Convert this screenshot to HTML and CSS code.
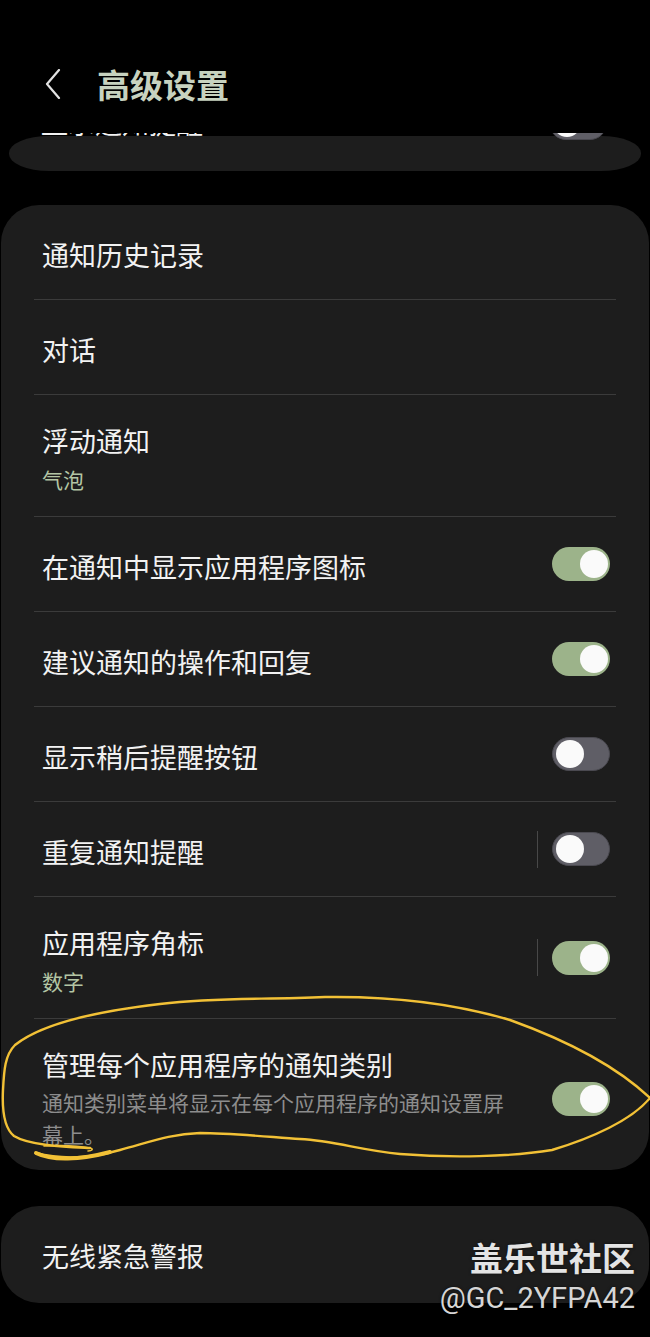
FILE: index.html
```html
<!DOCTYPE html>
<html lang="zh-CN">
	<head>
		<meta charset="UTF-8" />
		<meta name="viewport" content="width=device-width, initial-scale=1.0" />
		<title>高级设置</title>
		<link rel="stylesheet" href="styles.css">
	</head>
	<body>
		<header class="topbar">
			<svg class="back" width="16" height="30" viewBox="0 0 16 30">
				<polyline points="14,1 2,15 14,29" fill="none" stroke="#e2e2e2" stroke-width="2.2" stroke-linecap="round" stroke-linejoin="round" />
			</svg>
			<h1>高级设置</h1>
		</header>

		<!-- card scrolled under the header -->
		<div class="peek">
			<div class="peek-card">
				<span class="peek-text">显示通知提醒</span>
				<div class="switch off"><div class="knob"></div></div>
			</div>
		</div>

		<div class="card">
			<div class="row">
				<div class="text"><div class="title">通知历史记录</div></div>
			</div>
			<div class="row">
				<div class="text"><div class="title">对话</div></div>
			</div>
			<div class="row tall">
				<div class="text">
					<div class="title">浮动通知</div>
					<div class="sub">气泡</div>
				</div>
			</div>
			<div class="row">
				<div class="text"><div class="title">在通知中显示应用程序图标</div></div>
				<div class="switch on"><div class="knob"></div></div>
			</div>
			<div class="row">
				<div class="text"><div class="title">建议通知的操作和回复</div></div>
				<div class="switch on"><div class="knob"></div></div>
			</div>
			<div class="row">
				<div class="text"><div class="title">显示稍后提醒按钮</div></div>
				<div class="switch off"><div class="knob"></div></div>
			</div>
			<div class="row">
				<div class="text"><div class="title">重复通知提醒</div></div>
				<div class="sep"></div>
				<div class="switch off"><div class="knob"></div></div>
			</div>
			<div class="row tall">
				<div class="text">
					<div class="title">应用程序角标</div>
					<div class="sub">数字</div>
				</div>
				<div class="sep"></div>
				<div class="switch on"><div class="knob"></div></div>
			</div>
			<div class="row last">
				<div class="text">
					<div class="title">管理每个应用程序的通知类别</div>
					<div class="desc">通知类别菜单将显示在每个应用程序的通知设置屏幕上。</div>
				</div>
				<div class="switch on"><div class="knob"></div></div>
			</div>
		</div>

		<div class="card single">
			<div class="title">无线紧急警报</div>
		</div>

		<div class="watermark">
			<div class="wm-name">盖乐世社区</div>
			<div class="wm-id">@GC_2YFPA42</div>
		</div>

		<!-- hand drawn marker on top of the screenshot -->
		<svg class="marker" width="650" height="1337" viewBox="0 0 650 1337">
			<path d="M 90 1148 C 70 1147, 30 1146, 14 1136 C 4 1128, 2 1110, 3 1090 C 4 1070, 5 1055, 15 1045 C 40 1025, 90 1012, 160 1004 C 220 997, 260 1000, 325 997 C 400 996, 460 1005, 510 1020 C 560 1038, 612 1062, 650 1098 C 632 1120, 592 1138, 552 1150 C 510 1157, 450 1158, 400 1154 C 360 1150, 335 1141, 300 1139 C 270 1137, 230 1133, 200 1133 C 170 1134, 150 1142, 120 1150 C 92 1158, 62 1160, 36 1153" fill="none" stroke="#f2c136" stroke-width="2.4" stroke-linecap="round" />
			<path d="M 36 1153 C 52 1161, 80 1160, 110 1152" fill="none" stroke="#f2c136" stroke-width="4" stroke-linecap="round" />
			<path d="M 44 1146 C 60 1145, 80 1146, 90 1148 C 94 1149, 92 1151, 88 1151" fill="none" stroke="#f2c136" stroke-width="1.6" stroke-linecap="round" />
		</svg>
	</body>
</html>
```

FILE: styles.css
```css
body {
	margin: 0;
	background: #000;
	color: #f2f2f2;
	font-family: "Noto Sans CJK SC", "Noto Sans", sans-serif;
	position: relative;
	width: 650px;
	height: 1337px;
	overflow: hidden;
}
.topbar {
	height: 133px;
	box-sizing: border-box;
	padding: 60px 0 0 45px;
	display: flex;
	align-items: flex-start;
}
.topbar .back {
	margin-top: 9px;
}
.topbar h1 {
	margin: 0 0 0 36px;
	height: 48px;
	line-height: 48px;
	font-size: 33px;
	font-weight: 700;
	color: #c7d2bf;
}
.peek {
	height: 38px;
	overflow: hidden;
}
.peek-card {
	margin: 3px 9px 0;
	height: 35px;
	background: #1d1d1d;
	border-radius: 40px / 17px;
	display: flex;
	justify-content: space-between;
	padding: 0 34px 0 32px;
}
.peek-text {
	margin-top: -31px;
	font-size: 27px;
	line-height: 36px;
	height: 36px;
}
.peek-card .switch {
	margin-top: -30px;
}
.card {
	margin: 34px 1px 0;
	background: #1d1d1d;
	border-radius: 38px;
}
.row {
	margin: 0 33px;
	padding: 0 6px 0 8px;
	min-height: 94px;
	border-bottom: 1px solid #3b3b3b;
	display: flex;
	align-items: center;
}
.row.tall {
	min-height: 121px;
}
.row.last {
	border-bottom: none;
	padding-top: 28px;
	padding-bottom: 20px;
	min-height: 0;
}
.text {
	flex: 1;
	padding-top: 5px;
}
.row.last .text {
	padding-top: 0;
}
.title {
	font-size: 27px;
	line-height: 36px;
}
.sub {
	margin-top: 5px;
	font-size: 21px;
	line-height: 30px;
	color: #b3c5a4;
}
.desc {
	margin-top: 3px;
	max-width: 470px;
	font-size: 21px;
	line-height: 32px;
	color: #8d8d8d;
}
.sep {
	width: 1px;
	height: 37px;
	background: #484848;
	margin-right: 14px;
}
.switch {
	width: 58px;
	height: 34px;
	box-sizing: border-box;
	border-radius: 17px;
	padding: 3px;
	display: flex;
	flex-shrink: 0;
}
.switch.on {
	background: #9cb38a;
	justify-content: flex-end;
	padding-right: 2px;
}
.switch.off {
	background: #5f5e66;
	border: 1.5px solid #4a4950;
	padding: 2px 3px;
}
.knob {
	width: 28px;
	height: 28px;
	border-radius: 50%;
	background: #fafafa;
}
.card.single {
	margin-top: 36px;
	height: 97px;
	box-sizing: border-box;
	padding: 3px 0 0 41px;
	display: flex;
	align-items: center;
}
.watermark {
	position: absolute;
	right: 15px;
	top: 1234px;
	text-align: right;
	color: #e4e4e4;
	text-shadow: 0 0 3px rgba(0, 0, 0, 0.6);
}
.wm-name {
	font-size: 33px;
	font-weight: 700;
	line-height: 46px;
}
.wm-id {
	font-family: Roboto, "Liberation Sans", sans-serif;
	font-size: 29px;
	line-height: 36px;
	color: #d6d6d6;
}
.marker {
	position: absolute;
	left: 0;
	top: 0;
	pointer-events: none;
}
```
